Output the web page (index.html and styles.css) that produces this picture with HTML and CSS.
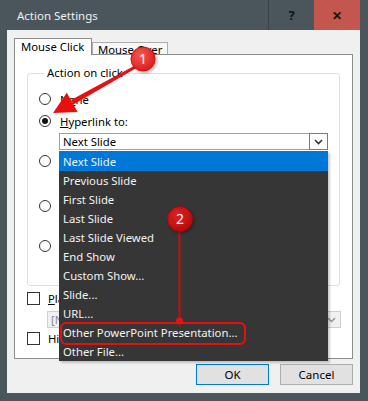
FILE: index.html
```html
<!DOCTYPE html>
<html lang="en">
<head>
  <meta charset="UTF-8">
  <title>Action Settings</title>
  <link rel="stylesheet" href="styles.css">
</head>
<body>
  <div class="window">
    <div class="titlebar">
      <span class="title">Action Settings</span>
      <div class="caption-btns">
        <div class="cap-btn help">?</div>
        <div class="cap-btn close">&#x2715;</div>
      </div>
    </div>

    <div class="client">
      <div class="tabs">
        <div class="tab active">Mouse Click</div>
        <div class="tab">Mouse Over</div>
      </div>

      <div class="panel">
        <fieldset class="group">
          <legend>Action on click</legend>
          <div class="radio-row first"><span class="radio"></span><span class="lbl">N<u>o</u>ne</span></div>
          <div class="radio-row r2"><span class="radio checked"></span><span class="lbl"><u>H</u>yperlink to:</span></div>
          <div class="combo">
            <span class="combo-text">Next Slide</span>
            <span class="combo-btn">
              <svg width="9" height="6" viewBox="0 0 9 6"><path d="M1 1 L4.5 4.5 L8 1" fill="none" stroke="#333" stroke-width="1.6"/></svg>
            </span>
          </div>
          <!-- the remaining options sit under the open list -->
          <div class="radio-row r3"><span class="radio"></span></div>
          <div class="field-gap"></div>
          <div class="radio-row"><span class="radio"></span></div>
          <div class="field-gap short"></div>
          <div class="radio-row"><span class="radio"></span></div>
        </fieldset>

        <div class="check-row first"><span class="checkbox"></span><span class="lbl"><u>P</u>lay sound:</span></div>
        <div class="sound-combo">
          <span>[No Sound]</span>
          <svg width="9" height="6" viewBox="0 0 9 6"><path d="M1 1 L4.5 4.5 L8 1" fill="none" stroke="#9a9a9a" stroke-width="1.6"/></svg>
        </div>
        <div class="check-row second"><span class="checkbox"></span><span class="lbl">Hi<u>g</u>hlight click</span></div>
      </div>

      <div class="buttons">
        <div class="btn default">OK</div>
        <div class="btn">Cancel</div>
      </div>
    </div>

    <ul class="dropdown">
      <li class="selected">Next Slide</li>
      <li>Previous Slide</li>
      <li>First Slide</li>
      <li>Last Slide</li>
      <li>Last Slide Viewed</li>
      <li>End Show</li>
      <li>Custom Show...</li>
      <li>Slide...</li>
      <li>URL...</li>
      <li>Other PowerPoint Presentation...</li>
      <li>Other File...</li>
    </ul>

    <!-- callouts drawn on top of the screenshot -->
    <svg class="notes" width="368" height="401" viewBox="0 0 368 401">
      <defs>
        <radialGradient id="badge1" cx="0.4" cy="0.35" r="0.7">
          <stop offset="0" stop-color="#f65a4f"/>
          <stop offset="1" stop-color="#d9191c"/>
        </radialGradient>
        <radialGradient id="badge2" cx="0.4" cy="0.35" r="0.7">
          <stop offset="0" stop-color="#e0201f"/>
          <stop offset="1" stop-color="#b40a0d"/>
        </radialGradient>
        <filter id="shadow" x="-50%" y="-50%" width="200%" height="200%">
          <feDropShadow dx="1.5" dy="1.5" stdDeviation="1.5" flood-color="#000" flood-opacity="0.35"/>
        </filter>
      </defs>

      <polygon points="71,100.1 73.4,104.5 137.7,67.3 136.3,64.7" fill="#e8100f"/>
      <polygon points="53,113 66.8,92.7 77.6,111.9" fill="#e8100f"/>
      <circle cx="143" cy="59" r="12" fill="url(#badge1)" stroke="#c81515" stroke-width="1" filter="url(#shadow)"/>
      <text x="143" y="64" class="badge-num">1</text>

      <line x1="179.5" y1="230" x2="179.5" y2="321" stroke="#c80d0d" stroke-width="2"/>
      <circle cx="179.5" cy="321" r="3.5" fill="#e8100f"/>
      <rect x="61" y="323" width="184" height="21" rx="5" fill="none" stroke="#e8100f" stroke-width="2"/>
      <circle cx="180" cy="219" r="12.5" fill="url(#badge2)" stroke="#9a0a0a" stroke-width="1" filter="url(#shadow)"/>
      <text x="180" y="224" class="badge-num">2</text>
    </svg>
  </div>
</body>
</html>
```

FILE: styles.css
```css
body {
  margin: 0;
  font-family: "Noto Sans", sans-serif;
  font-size: 11.3px;
  color: #000;
}
.window {
  position: relative;
  width: 368px;
  height: 401px;
  box-sizing: border-box;
  background-color: #4b555c;
  padding: 0 8px 8px 7px;
}

/* title bar */
.titlebar {
  height: 30px;
  display: flex;
  align-items: stretch;
  justify-content: space-between;
}
.title {
  color: #eef0f1;
  font-size: 11.5px;
  padding-left: 10px;
  line-height: 32px;
}
.caption-btns {
  display: flex;
}
.cap-btn {
  width: 46px;
  display: flex;
  align-items: center;
  justify-content: center;
  font-weight: bold;
  color: #111;
}
.cap-btn.help {
  box-sizing: border-box;
  border-left: 1px solid #3a4247;
  font-size: 13px;
}
.cap-btn.close {
  background-color: #c4574d;
  font-size: 12px;
}

/* dialog body */
.client {
  height: 363px;
  box-sizing: border-box;
  background-color: #f0f0f0;
  padding: 8px 7px 9px 7px;
}
.tabs {
  display: flex;
  align-items: flex-end;
  height: 16px;
}
.tab {
  box-sizing: border-box;
  height: 12px;
  border: 1px solid #adadad;
  border-bottom: none;
  background-color: #f7f7f7;
  padding: 0 5px;
  line-height: 14px;
  white-space: nowrap;
}
.tab.active {
  position: relative;
  z-index: 1;
  height: 17px;
  margin-bottom: -1px;
  background-color: #fff;
  border-color: #8c8c8c;
  padding: 0 6px;
  line-height: 16px;
  width: 78px;
}
.panel {
  height: 305px;
  box-sizing: border-box;
  border: 1px solid #8c8c8c;
  background-color: #fff;
  padding: 10px 12px 0 12px;
}

.group {
  margin: 0;
  padding: 0 0 0 11px;
  height: 221px;
  box-sizing: border-box;
  border: 1px solid #dcdfe4;
  border-radius: 3px;
}
.group legend {
  margin-left: 5px;
  padding: 0 3px;
  line-height: 16px;
}
.radio-row {
  display: flex;
  align-items: center;
  height: 16px;
}
.radio-row.first { margin-top: 10px; }
.radio-row.r2 { margin-top: 6px; }
.radio-row.r3 { margin-top: 3px; }
.field-gap { height: 29px; }
.field-gap.short { height: 24px; }
.radio {
  width: 12px;
  height: 12px;
  box-sizing: border-box;
  border: 1px solid #333;
  border-radius: 50%;
  margin-right: 9px;
  display: flex;
  align-items: center;
  justify-content: center;
  background-color: #fff;
}
.radio.checked::after {
  content: "";
  width: 6px;
  height: 6px;
  border-radius: 50%;
  background-color: #111;
}

.combo {
  display: flex;
  align-items: stretch;
  margin: 4px 0 0 20px;
  width: 269px;
  height: 17px;
  box-sizing: border-box;
  border: 1px solid #a0a0a0;
  border-right: none;
  background-color: #fff;
}
.combo-text {
  flex: 1;
  padding-left: 3px;
  line-height: 15px;
}
.combo-btn {
  width: 19px;
  box-sizing: border-box;
  border: 1px solid #7a7a7a;
  margin-top: -1px;
  height: 17px;
  display: flex;
  align-items: center;
  justify-content: center;
}

.check-row {
  display: flex;
  align-items: center;
  height: 13px;
}
.check-row.first { margin-top: 6px; }
.check-row.second { margin-top: 4px; }
.checkbox {
  width: 13px;
  height: 13px;
  box-sizing: border-box;
  border: 1px solid #333;
  background-color: #fff;
  margin-right: 8px;
}
.sound-combo {
  display: flex;
  align-items: center;
  justify-content: space-between;
  margin: 6px 0 0 20px;
  width: 294px;
  height: 17px;
  box-sizing: border-box;
  border: 1px solid #cfcfcf;
  background-color: #f0f0f0;
  color: #8a8a8a;
  padding: 0 4px 0 3px;
}

.buttons {
  display: flex;
  justify-content: flex-end;
  gap: 11px;
  margin-top: 5px;
}
.btn {
  width: 73px;
  height: 21px;
  box-sizing: border-box;
  border: 1px solid #adadad;
  background-color: #e1e1e1;
  text-align: center;
  line-height: 19px;
  font-size: 11.5px;
}
.btn.default {
  border-color: #0078d7;
}

/* open list of the hyperlink combo */
.dropdown {
  position: absolute;
  left: 59px;
  top: 151px;
  width: 269px;
  margin: 0;
  padding: 0;
  list-style: none;
  background-color: #363636;
  box-shadow: 2px 2px 2px rgba(0, 0, 0, 0.2);
  color: #f2f2f2;
}
.dropdown li {
  height: 19px;
  line-height: 19px;
  padding-left: 4px;
}
.dropdown li.selected {
  height: 20px;
  line-height: 21px;
  background-color: #0078d7;
}

.notes {
  position: absolute;
  left: 0;
  top: 0;
  pointer-events: none;
}
.badge-num {
  fill: #fff;
  font-family: "Noto Sans", sans-serif;
  font-size: 14px;
  text-anchor: middle;
}
```
